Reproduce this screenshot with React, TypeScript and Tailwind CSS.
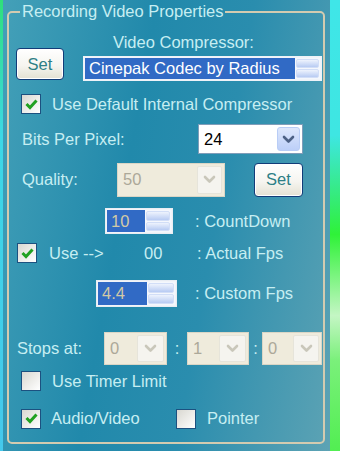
import React from 'react';

const Chevron = ({ color }: { color: string }) => (
  <svg width="13" height="9" viewBox="0 0 13 9">
    <path d="M2 2 L6.5 6.5 L11 2" fill="none" stroke={color} strokeWidth="2.6" strokeLinecap="round" strokeLinejoin="round" />
  </svg>
);

const CheckBox = ({ checked }: { checked?: boolean }) => (
  <div className="w-[20px] h-[20px] shrink-0 border border-[#1c5180] bg-[linear-gradient(135deg,#d9d8d1,#ffffff)] flex items-center justify-center">
    {checked && (
      <svg width="13" height="11" viewBox="0 0 13 11">
        <path d="M1.5 5 L5 8.5 L11.5 1.5" fill="none" stroke="#21a121" strokeWidth="3" />
      </svg>
    )}
  </div>
);

const SetButton = ({ className }: { className: string }) => (
  <button className={`${className} shrink-0 rounded-[4px] border border-[#123c78] bg-[linear-gradient(180deg,#ffffff_0%,#f6f5f0_55%,#e4e1d3_100%)] shadow-[inset_0_0_0_1px_#ffffff] text-[#2d7f86] text-[16.5px] leading-none flex items-center justify-center`}>
    Set
  </button>
);

const SpinBars = () => (
  <div className="flex flex-col gap-[1px] h-full w-full bg-[#f4f7fd] p-[1px]">
    <div className="flex-1 rounded-[2px] border border-[#d2def7] bg-[linear-gradient(180deg,#eef3fd,#b8cbf3)]" />
    <div className="flex-1 rounded-[2px] border border-[#d2def7] bg-[linear-gradient(180deg,#eef3fd,#b8cbf3)]" />
  </div>
);

const Spinner = ({ value, className, textW }: { value: string; className: string; textW: string }) => (
  <div className={`${className} shrink-0 flex border border-[#e9edf3] bg-[#f1f4f9] p-[1px]`}>
    <div className={`${textW} bg-[#316ac5] text-[#d2c9a6] flex items-center pl-[4px]`}>{value}</div>
    <div className="flex-1">
      <SpinBars />
    </div>
  </div>
);

const DisabledCombo = ({ value, className, btnW }: { value: string; className: string; btnW: string }) => (
  <div className={`${className} shrink-0 flex border border-[#dad6c6] bg-[#efebdc] p-[2px]`}>
    <div className="flex-1 text-[#aca899] pl-[3px] flex items-center">{value}</div>
    <div className={`${btnW} bg-[#f5f4ef] border border-[#e6e4da] rounded-[2px] flex items-center justify-center`}>
      <Chevron color="#c9c7ba" />
    </div>
  </div>
);

export default function App() {
  return (
    <div className="w-[340px] h-[451px] flex overflow-hidden font-['Liberation_Sans',Arial,sans-serif] text-[16.5px] leading-[19px] text-[#c6eef2]">
      <div className="w-[3px] bg-[linear-gradient(180deg,#2fe07a,#3cd8e6_30%,#45c8ec)]" />
      <div className="flex-1 bg-[linear-gradient(100deg,#44a0b8_0%,#2189ab_38%,#2a8dae_62%,#5da3b4_100%)] pt-[2px]">
        <fieldset className="ml-[4px] w-[318px] border-2 border-[#d3cbb0] rounded-[5px] pb-[13px]">
          <legend className="ml-[11px] px-[2px] leading-[19px]">Recording Video Properties</legend>

          <div className="mt-[13px] flex items-end">
            <SetButton className="ml-[7px] w-[48px] h-[32px] mb-[1px]" />
            <div className="ml-[19px] flex flex-col">
              <div className="pl-[30px] leading-[16px]">Video Compressor:</div>
              <div className="mt-[6px] w-[239px] h-[25px] flex border border-[#eef2f8] bg-[#f1f4f9] p-[1px]">
                <div className="w-[210px] bg-[#316ac5] text-white flex items-center pl-[4px]">Cinepak Codec by Radius</div>
                <div className="flex-1">
                  <SpinBars />
                </div>
              </div>
            </div>
          </div>

          <div className="mt-[13px] h-[20px] flex items-center">
            <div className="ml-[12px]"><CheckBox checked /></div>
            <span className="ml-[11px]">Use Default Internal Compressor</span>
          </div>

          <div className="mt-[10px] h-[30px] flex items-center">
            <span className="ml-[13px] w-[176px]">Bits Per Pixel:</span>
            <div className="w-[105px] h-[30px] flex border border-[#7f9db9] bg-white p-[2px]">
              <div className="flex-1 text-black pl-[3px] flex items-center">24</div>
              <div className="w-[23px] rounded-[3px] border border-[#b9cdf6] bg-[linear-gradient(180deg,#dde7fc,#bccff8)] flex items-center justify-center">
                <Chevron color="#4d6185" />
              </div>
            </div>
          </div>

          <div className="mt-[8px] h-[35px] flex items-center">
            <span className="ml-[13px] w-[95px]">Quality:</span>
            <DisabledCombo value="50" className="w-[108px] h-[34px]" btnW="w-[25px]" />
            <SetButton className="ml-[29px] w-[49px] h-[34px]" />
          </div>

          <div className="mt-[11px] h-[26px] flex items-center">
            <Spinner value="10" className="ml-[96px] w-[68px] h-[26px]" textW="w-[38px]" />
            <span className="ml-[22px]">: CountDown</span>
          </div>

          <div className="mt-[9px] h-[20px] flex items-center">
            <div className="ml-[8px]"><CheckBox checked /></div>
            <span className="ml-[12px] w-[95px]">Use --&gt;</span>
            <span className="w-[53px]">00</span>
            <span>: Actual Fps</span>
          </div>

          <div className="mt-[17px] h-[27px] flex items-center">
            <Spinner value="4.4" className="ml-[87px] w-[81px] h-[27px]" textW="w-[49px]" />
            <span className="ml-[18px]">: Custom Fps</span>
          </div>

          <div className="mt-[25px] h-[33px] flex items-center">
            <span className="ml-[8px] w-[87px]">Stops at:</span>
            <DisabledCombo value="0" className="w-[63px] h-[33px]" btnW="w-[27px]" />
            <span className="w-[20px] text-center">:</span>
            <DisabledCombo value="1" className="w-[62px] h-[33px]" btnW="w-[27px]" />
            <span className="w-[13px] text-center">:</span>
            <DisabledCombo value="0" className="w-[60px] h-[33px]" btnW="w-[26px]" />
          </div>

          <div className="mt-[6px] h-[20px] flex items-center">
            <div className="ml-[12px]"><CheckBox /></div>
            <span className="ml-[11px]">Use Timer Limit</span>
          </div>

          <div className="mt-[17px] h-[21px] flex items-center">
            <div className="ml-[12px]"><CheckBox checked /></div>
            <span className="ml-[10px] w-[125px]">Audio/Video</span>
            <CheckBox />
            <span className="ml-[11px]">Pointer</span>
          </div>
        </fieldset>
      </div>
      <div className="w-[10px] bg-[linear-gradient(180deg,#3fe6e8_0%,#3ee6e2_30%,#34ec70_45%,#2ff238_52%,#c4f6c4_70%,#7af07a_80%,#52ee52_100%)]" />
    </div>
  );
}
